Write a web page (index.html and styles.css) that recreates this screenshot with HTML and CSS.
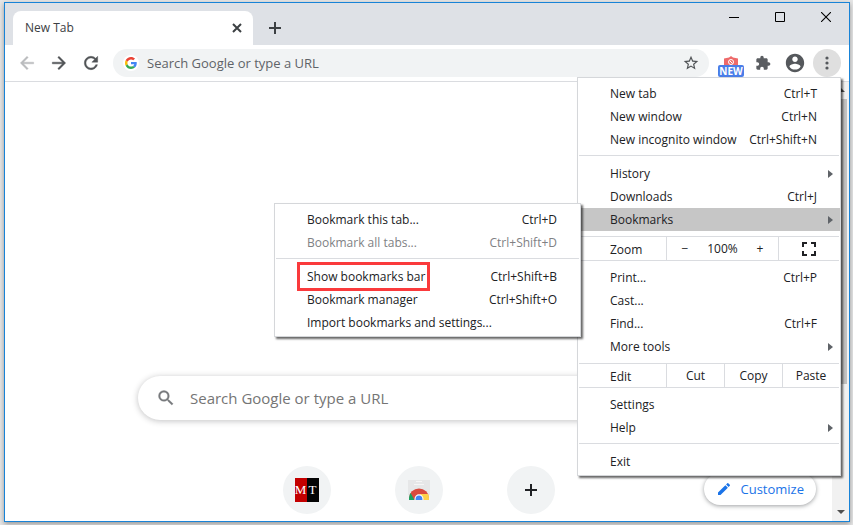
FILE: index.html
```html
<!DOCTYPE html>
<html lang="en">
<head>
<meta charset="utf-8">
<title>New Tab</title>
<link rel="stylesheet" href="styles.css">
</head>
<body>
<div class="window">
  <header class="tabstrip">
    <div class="tab">
      <span class="tab-title">New Tab</span>
      <button class="tab-close" aria-label="Close tab"><svg width="10" height="10" viewBox="0 0 10 10"><path d="M1 1l8 8M9 1l-8 8" stroke="#3c4043" stroke-width="2"/></svg></button>
    </div>
    <button class="new-tab" aria-label="New tab"><svg width="12" height="12" viewBox="0 0 12 12"><path d="M6 0v12M0 6h12" stroke="#3c4043" stroke-width="2"/></svg></button>
    <div class="caption">
      <button aria-label="Minimize"><svg width="10" height="10" viewBox="0 0 10 10"><path d="M0 5.500h10" stroke="#000"/></svg></button>
      <button aria-label="Maximize"><svg width="10" height="10" viewBox="0 0 10 10"><path d="M.5.5h9v9h-9z" fill="none" stroke="#000"/></svg></button>
      <button aria-label="Close"><svg width="10" height="10" viewBox="0 0 10 10"><path d="M0 0l10 10M10 0L0 10" stroke="#000" stroke-width="1.100"/></svg></button>
    </div>
  </header>

  <nav class="toolbar">
    <div class="nav-buttons">
      <button aria-label="Back"><svg width="20" height="20" viewBox="0 0 24 24"><path fill="#babcbe" stroke="#babcbe" stroke-width=".5" d="M20 11H7.830l5.590-5.590L12 4l-8 8 8 8 1.410-1.410L7.830 13H20v-2z"/></svg></button>
      <button aria-label="Forward"><svg width="20" height="20" viewBox="0 0 24 24"><path fill="#505356" stroke="#505356" stroke-width=".5" d="M12 4l-1.410 1.410L16.170 11H4v2h12.170l-5.580 5.590L12 20l8-8z"/></svg></button>
      <button aria-label="Reload"><svg width="20" height="20" viewBox="0 0 24 24"><path fill="#505356" stroke="#505356" stroke-width=".5" d="M17.650 6.350C16.200 4.900 14.210 4 12 4c-4.420 0-7.990 3.580-8 8s3.570 8 8 8c3.730 0 6.840-2.550 7.730-6h-2.080c-.82 2.330-3.040 4-5.650 4-3.310 0-6-2.690-6-6s2.690-6 6-6c1.660 0 3.140.69 4.220 1.780L13 11h7V4l-2.350 2.350z"/></svg></button>
    </div>
    <div class="omnibox">
      <span class="g-logo"><svg width="12" height="12" viewBox="0 0 48 48"><path fill="#EA4335" d="M24 9.500c3.540 0 6.710 1.220 9.210 3.600l6.850-6.850C35.900 2.380 30.470 0 24 0 14.620 0 6.510 5.380 2.560 13.220l7.980 6.190C12.430 13.720 17.740 9.500 24 9.500z"/><path fill="#4285F4" d="M46.980 24.550c0-1.570-.15-3.090-.38-4.550H24v9.020h12.940c-.58 2.960-2.260 5.480-4.780 7.180l7.730 6c4.510-4.180 7.090-10.360 7.090-17.650z"/><path fill="#FBBC05" d="M10.530 28.590c-.48-1.450-.76-2.990-.76-4.590s.27-3.140.76-4.590l-7.980-6.190C.92 16.460 0 20.120 0 24s.92 7.540 2.560 10.780l7.970-6.190z"/><path fill="#34A853" d="M24 48c6.480 0 11.930-2.130 15.890-5.810l-7.730-6c-2.150 1.450-4.920 2.300-8.160 2.300-6.260 0-11.570-4.220-13.470-9.910l-7.980 6.190C6.510 42.620 14.620 48 24 48z"/></svg></span>
      <input type="text" placeholder="Search Google or type a URL" aria-label="Address and search bar">
      <button class="star" aria-label="Bookmark this tab"><svg width="16" height="16" viewBox="1 1 22 22"><path fill="#505356" d="M22 9.240l-7.190-.62L12 2 9.190 8.630 2 9.240l5.460 4.730L5.820 21 12 17.270 18.180 21l-1.630-7.030L22 9.240zM12 15.400l-3.760 2.270 1-4.280-3.320-2.880 4.380-.38L12 6.100l1.710 4.040 4.380.38-3.320 2.880 1 4.280L12 15.400z"/></svg></button>
    </div>
    <div class="actions">
      <button class="extension" aria-label="Extension">
        <svg width="14" height="10" viewBox="0 0 14 10"><path fill="#ee6a6a" d="M5 1.500L7 0l2 1.500 5 1V10H0V2.500z"/><circle cx="7" cy="6" r="2.500" fill="none" stroke="#fff"/><path d="M5.500 4.500l3 3" stroke="#fff"/></svg>
        <span class="badge">NEW</span>
      </button>
      <button aria-label="Extensions"><svg width="16" height="16" viewBox="0 0 24 24"><path fill="#5a5d61" d="M20.500 11H19V7c0-1.100-.9-2-2-2h-4V3.500C13 2.120 11.880 1 10.500 1S8 2.120 8 3.500V5H4c-1.100 0-1.990.9-1.990 2v3.800H3.500c1.490 0 2.700 1.210 2.700 2.700s-1.210 2.700-2.700 2.700H2V20c0 1.100.9 2 2 2h3.800v-1.500c0-1.490 1.210-2.700 2.700-2.700s2.700 1.210 2.700 2.700V22H17c1.100 0 2-.9 2-2v-4h1.500c1.380 0 2.500-1.120 2.500-2.500S21.880 11 20.500 11z"/></svg></button>
      <button aria-label="Profile"><svg width="22" height="22" viewBox="0 0 24 24"><path fill="#55585c" d="M12 2C6.480 2 2 6.480 2 12s4.480 10 10 10 10-4.480 10-10S17.520 2 12 2zm0 3c1.660 0 3 1.340 3 3s-1.340 3-3 3-3-1.340-3-3 1.340-3 3-3zm0 14.200c-2.500 0-4.710-1.280-6-3.220.03-1.990 4-3.080 6-3.080 1.990 0 5.970 1.090 6 3.080-1.290 1.940-3.500 3.220-6 3.220z"/></svg></button>
      <button class="more" aria-label="Customize and control"><svg width="4" height="14" viewBox="0 0 4 14"><g fill="#55585c"><circle cx="2" cy="2" r="1.600"/><circle cx="2" cy="7" r="1.600"/><circle cx="2" cy="12" r="1.600"/></g></svg></button>
    </div>
  </nav>

  <div class="content">
    <main class="page">
      <label class="search">
        <svg width="20" height="20" viewBox="0 0 24 24"><path fill="#77797c" stroke="#77797c" stroke-width=".4" d="M15.500 14h-.79l-.28-.27A6.471 6.471 0 0 0 16 9.500 6.500 6.500 0 1 0 9.500 16c1.610 0 3.090-.59 4.230-1.570l.27.28v.79l5 4.990L20.490 19l-4.990-5zm-6 0C7.010 14 5 11.990 5 9.500S7.010 5 9.500 5 14 7.010 14 9.500 11.990 14 9.500 14z"/></svg>
        <input type="text" placeholder="Search Google or type a URL" aria-label="Search">
      </label>
      <div class="tiles">
        <a class="tile" href="#" aria-label="MT"><span class="mt"><span class="mt-m">M</span><span class="mt-t">T</span></span></a>
        <a class="tile" href="#" aria-label="Web Store"><svg width="22" height="20" viewBox="0 0 22 20"><path fill="#e6e7e8" d="M0 0h22v15H0z"/><path d="M8 1.500h6M6 4.500h10" stroke="#f6f6f6"/><path fill="#d94a3e" d="M1 20v-2a10 9.500 0 0 1 20 0v2z"/><path fill="#1aa260" d="M1 20v-2a10 9.500 0 0 1 1.600-5L6.500 20z"/><path fill="#fdd04a" d="M21 20v-2a10 9.500 0 0 0-.9-4H12l3.500 6z"/><path fill="#fff" d="M6.500 20v-1a4.500 4.700 0 0 1 9 0v1z"/><path fill="#4285f4" d="M7.600 20v-1a3.400 3.600 0 0 1 6.800 0v1z"/></svg></a>
        <button class="tile" aria-label="Add shortcut"><svg width="12" height="12" viewBox="0 0 12 12"><path d="M6 0v12M0 6h12" stroke="#202124" stroke-width="2"/></svg></button>
      </div>
      <button class="customize"><svg width="16" height="16" viewBox="0 0 24 24"><path fill="#1a73e8" d="M3 17.250V21h3.750L17.810 9.940l-3.750-3.750L3 17.250zM20.710 7.040a1 1 0 0 0 0-1.410l-2.340-2.340a1 1 0 0 0-1.410 0l-1.830 1.830 3.750 3.750 1.830-1.830z"/></svg>Customize</button>
    </main>
    <div class="scrollbar">
      <span class="arrow-up"></span>
      <span class="thumb"></span>
      <span class="arrow-down"></span>
    </div>
  </div>

  <div class="menu main-menu">
    <button class="item"><span>New tab</span><span>Ctrl+T</span></button>
    <button class="item"><span>New window</span><span>Ctrl+N</span></button>
    <button class="item"><span>New incognito window</span><span>Ctrl+Shift+N</span></button>
    <hr>
    <button class="item sub"><span>History</span></button>
    <button class="item"><span>Downloads</span><span>Ctrl+J</span></button>
    <button class="item sub active"><span>Bookmarks</span></button>
    <div class="split zoom">
      <span class="split-label">Zoom</span>
      <div class="zoom-level"><button aria-label="Zoom out">−</button><span>100%</span><button aria-label="Zoom in">+</button></div>
      <button class="cell" aria-label="Full screen"><svg width="14" height="14" viewBox="0 0 14 14"><path d="M1 5V1h4M9 1h4v4M13 9v4H9M5 13H1V9" fill="none" stroke="#202124" stroke-width="2"/></svg></button>
    </div>
    <button class="item"><span>Print...</span><span>Ctrl+P</span></button>
    <button class="item"><span>Cast...</span></button>
    <button class="item"><span>Find...</span><span>Ctrl+F</span></button>
    <button class="item sub"><span>More tools</span></button>
    <div class="split edit">
      <span class="split-label">Edit</span>
      <button class="cell">Cut</button>
      <button class="cell">Copy</button>
      <button class="cell">Paste</button>
    </div>
    <button class="item"><span>Settings</span></button>
    <button class="item sub"><span>Help</span></button>
    <hr>
    <button class="item"><span>Exit</span></button>
  </div>

  <div class="menu sub-menu">
    <button class="item"><span>Bookmark this tab...</span><span>Ctrl+D</span></button>
    <button class="item" disabled><span>Bookmark all tabs...</span><span>Ctrl+Shift+D</span></button>
    <hr>
    <button class="item marked"><span>Show bookmarks bar</span><span>Ctrl+Shift+B</span></button>
    <button class="item"><span>Bookmark manager</span><span>Ctrl+Shift+O</span></button>
    <button class="item"><span>Import bookmarks and settings...</span></button>
  </div>
</div>
</body>
</html>
```
FILE: styles.css
```css
*, *::before, *::after { box-sizing: border-box; }

body {
  margin: 0;
  padding: 2px 3px 3px 4px;
  background: #e6e6e6;
  font: 12px/16px "Open Sans", "Noto Sans", sans-serif;
  color: #202124;
}

button, input {
  margin: 0;
  padding: 0;
  border: 0;
  background: none;
  font: inherit;
  color: inherit;
}

input { outline: 0; min-width: 0; flex: 1; height: 24px; line-height: 24px; }
svg { display: block; flex: none; }

.window {
  position: relative;
  display: flex;
  flex-direction: column;
  height: calc(100vh - 5px);
  min-height: 480px;
  border: 1px solid #1883d7;
  background: #fff;
  box-shadow: 0 2px 5px rgba(0, 0, 0, .35);
}

/* Tab strip */
.tabstrip {
  display: flex;
  height: 42px;
  padding: 8px 0 0 8px;
  background: #dee1e6;
}

.tab {
  display: flex;
  align-items: center;
  justify-content: space-between;
  width: 240px;
  padding: 0 10px 0 12px;
  border-radius: 8px 8px 0 0;
  background: #fff;
  color: #3c4043;
}

.tab-close, .new-tab {
  display: flex;
  align-items: center;
  justify-content: center;
}

.tab-close { width: 12px; height: 16px; }
.new-tab { width: 44px; }

.caption {
  display: flex;
  height: 28px;
  margin: -8px 0 0 auto;
}

.caption button {
  display: flex;
  align-items: center;
  justify-content: center;
  width: 46px;
}

/* Toolbar */
.toolbar {
  display: flex;
  align-items: center;
  height: 37px;
  padding: 0 8px;
  border-bottom: 1px solid #dadce0;
}

.nav-buttons { display: flex; width: 100px; }
.nav-buttons button, .actions button {
  display: flex;
  align-items: center;
  justify-content: center;
  width: 32px;
  height: 28px;
}
.nav-buttons button { padding-right: 4px; }

.omnibox {
  display: flex;
  flex: 1;
  align-items: center;
  height: 28px;
  padding: 0 10px;
  border-radius: 14px;
  background: #f1f3f4;
  font-size: 13px;
}

.g-logo {
  display: flex;
  align-items: center;
  justify-content: center;
  width: 16px;
  height: 16px;
  margin-right: 8px;
  border-radius: 50%;
  background: #fff;
}

.omnibox input::placeholder { color: #5f6368; opacity: 1; }

.actions { display: flex; padding-left: 6px; }
.actions .extension { position: relative; align-items: flex-start; padding-top: 7px; }
.badge {
  position: absolute;
  left: 3px;
  bottom: 0;
  width: 26px;
  border-radius: 2px;
  background: #4a7de8;
  color: #fff;
  font: bold 10px/12px "Open Sans", sans-serif;
  text-align: center;
}
.actions .more {
  width: 28px;
  margin: 0 0 0 2px;
  border-radius: 50%;
  background: #dfdfdf;
}

/* Page */
.content { display: flex; flex: 1; min-height: 0; }

.page {
  position: relative;
  display: flex;
  flex: 1;
  flex-direction: column;
  align-items: center;
  justify-content: flex-end;
  gap: 46px;
  padding-bottom: 7px;
}

.search {
  display: flex;
  align-items: center;
  width: 68%;
  max-width: 561px;
  height: 44px;
  padding: 0 18px;
  gap: 14px;
  border-radius: 22px;
  background: #fff;
  box-shadow: 0 1px 6px rgba(32, 33, 36, .28);
  font-size: 15px;
}
.search input::placeholder { color: #757575; opacity: 1; }

.tiles { display: flex; gap: 64px; }
.tile {
  display: flex;
  align-items: center;
  justify-content: center;
  width: 48px;
  height: 48px;
  border-radius: 50%;
  background: #f1f3f4;
  text-decoration: none;
}

.mt {
  display: flex;
  width: 24px;
  height: 24px;
  font: 13px/24px "Liberation Serif", serif;
  text-align: center;
  color: #fff;
}
.mt span { flex: 1 0 12px; width: 12px; }
.mt-m { background: #c40000; }
.mt-t { background: #050505; }

.customize {
  position: absolute;
  right: 16px;
  bottom: 16px;
  display: flex;
  align-items: center;
  gap: 8px;
  height: 32px;
  padding: 0 12px;
  border-radius: 16px;
  background: #fff;
  box-shadow: 0 1px 4px rgba(60, 64, 67, .5);
  color: #1a73e8;
  font-size: 13px;
}

.scrollbar {
  display: flex;
  flex-direction: column;
  align-items: center;
  width: 17px;
  padding: 6px 0 7px;
  background: #f1f1f1;
}
.arrow-up, .arrow-down {
  border: 4px solid transparent;
}
.arrow-up { border-top: 0; border-bottom-color: #505050; }
.arrow-down { border-bottom: 0; border-top-color: #505050; margin-top: auto; }
.thumb {
  width: 13px;
  height: 67%;
  margin-top: 7px;
  background: #c1c1c1;
}

/* Menus */
.menu {
  position: absolute;
  padding: 4px 0 2px;
  border: 1px solid #d5d7da;
  background: #fff;
  box-shadow: 2px 2px 2px rgba(0, 0, 0, .6);
}
.main-menu { top: 74px; right: 8px; width: 264px; }
.sub-menu { top: 200px; right: 268px; width: 307px; }

.menu hr {
  height: 1px;
  margin: 4px 1px 6px;
  border: 0;
  background: #dadce0;
}

.item {
  position: relative;
  display: flex;
  align-items: center;
  justify-content: space-between;
  width: 100%;
  height: 23px;
  padding: 0 23px 0 32px;
}
.item:disabled { color: #808184; }
.active { background: #c6c6c6; }
.sub::after {
  content: "";
  position: absolute;
  right: 7px;
  border: 4px solid transparent;
  border-right: 0;
  border-left: 5px solid #5f6368;
}
.marked::before {
  content: "";
  position: absolute;
  inset: -3px auto -3px 22px;
  width: 133px;
  border: 3px solid #fa3a3c;
}

.split {
  display: grid;
  height: 25px;
  margin: 5px 1px;
  border: solid #dadce0;
  border-width: 1px 0;
}
.zoom { grid-template-columns: 87px 112px 1fr; }
.edit { grid-template-columns: 87px 58px 58px 1fr; }
.split > * + * { border-left: 1px solid #dadce0; }
.split-label { padding: 5px 0 0 31px; }
.zoom-level { display: flex; align-items: center; }
.zoom-level button { width: 36px; }
.zoom-level span { flex: 1; text-align: center; }
.cell { display: flex; align-items: center; justify-content: center; }
```
